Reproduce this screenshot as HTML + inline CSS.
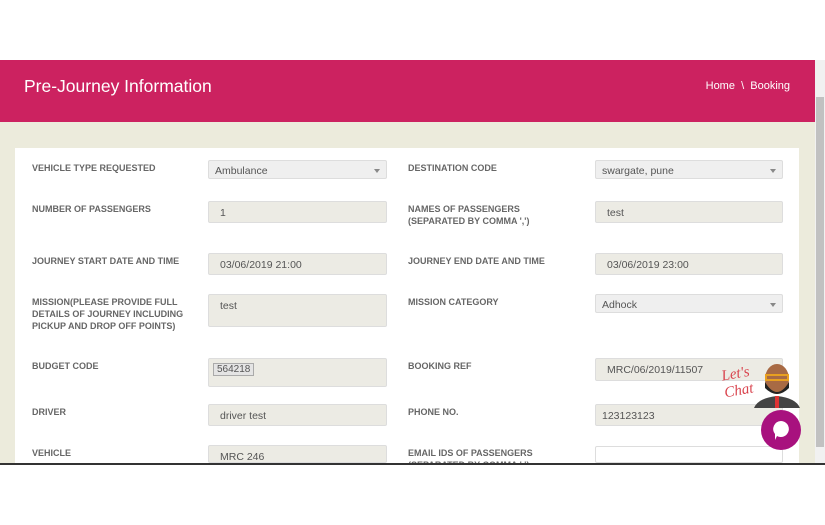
<!DOCTYPE html><html><head><style>
body{margin:0;width:825px;height:525px;overflow:hidden;background:#fff;font-family:"Liberation Sans",sans-serif;position:relative}
.hdr{position:absolute;left:0;top:60px;width:815px;height:62px;background:#cc2260}
.hdr h1{position:absolute;left:24px;top:16px;margin:0;font-weight:normal;font-size:17.5px;color:#fff}
.bc{position:absolute;right:25px;top:20px;font-size:11px;color:#fff}
.bg{position:absolute;left:0;top:122px;width:815px;height:341px;background:#ecebdc;overflow:hidden}
.card{position:absolute;left:15px;top:26px;width:784px;height:400px;background:#fff}
.sb{position:absolute;left:815px;top:60px;width:10px;height:403px;background:#f1f1f1}
.th{position:absolute;left:1px;top:37px;width:8px;height:350px;background:#c1c1c1}
.line{position:absolute;left:0;top:463px;width:825px;height:2px;background:#333}
.l{position:absolute;font-size:9px;font-weight:bold;color:#666;line-height:12px}
.i{position:absolute;background:#ecebe4;border:1px solid #ddd;border-radius:2px;font-size:10.5px;color:#555;box-sizing:border-box;padding:5px 11px}
.s{background:#efefef;padding:4px 6px}
.s:after{content:"";position:absolute;right:6px;top:8px;border:3px solid transparent;border-top:4px solid #888}
</style></head><body>
<div class="hdr"><h1>Pre-Journey Information</h1><div class="bc">Home &nbsp;\&nbsp; Booking</div></div>
<div class="bg"><div class="card"></div></div>
<div class="sb"><div class="th"></div></div>
<div class="line"></div>
<div class="l" style="left:32px;top:162px">VEHICLE TYPE REQUESTED</div>
<div class="i s" style="left:208px;top:160px;width:179px;height:19px">Ambulance</div>
<div class="l" style="left:408px;top:162px">DESTINATION CODE</div>
<div class="i s" style="left:595px;top:160px;width:188px;height:19px">swargate, pune</div>
<div class="l" style="left:32px;top:203px">NUMBER OF PASSENGERS</div>
<div class="i" style="left:208px;top:201px;width:179px;height:22px">1</div>
<div class="l" style="left:408px;top:203px">NAMES OF PASSENGERS<br>(SEPARATED BY COMMA ',')</div>
<div class="i" style="left:595px;top:201px;width:188px;height:22px">test</div>
<div class="l" style="left:32px;top:255px">JOURNEY START DATE AND TIME</div>
<div class="i" style="left:208px;top:253px;width:179px;height:22px">03/06/2019 21:00</div>
<div class="l" style="left:408px;top:255px">JOURNEY END DATE AND TIME</div>
<div class="i" style="left:595px;top:253px;width:188px;height:22px">03/06/2019 23:00</div>
<div class="l" style="left:32px;top:296px">MISSION(PLEASE PROVIDE FULL<br>DETAILS OF JOURNEY INCLUDING<br>PICKUP AND DROP OFF POINTS)</div>
<div class="i" style="left:208px;top:294px;width:179px;height:33px">test</div>
<div class="l" style="left:408px;top:296px">MISSION CATEGORY</div>
<div class="i s" style="left:595px;top:294px;width:188px;height:19px">Adhock</div>
<div class="l" style="left:32px;top:360px">BUDGET CODE</div>
<div class="i" style="left:208px;top:358px;width:179px;height:29px;padding:4px"><span style="border:1px solid #aaa;background:#e4e4e4;padding:0 3px;font-size:10px">564218</span></div>
<div class="l" style="left:408px;top:360px">BOOKING REF</div>
<div class="i" style="left:595px;top:358px;width:188px;height:23px">MRC/06/2019/11507</div>
<div class="l" style="left:32px;top:406px">DRIVER</div>
<div class="i" style="left:208px;top:404px;width:179px;height:22px">driver test</div>
<div class="l" style="left:408px;top:406px">PHONE NO.</div>
<div class="i" style="left:595px;top:404px;width:188px;height:22px;padding-left:6px">123123123</div>
<div class="l" style="left:32px;top:447px">VEHICLE</div>
<div class="i" style="left:208px;top:445px;width:179px;height:18px">MRC 246</div>
<div class="l" style="left:408px;top:447px;height:16px;overflow:hidden">EMAIL IDS OF PASSENGERS<br>(SEPARATED BY COMMA ',')</div>
<div class="i" style="left:595px;top:446px;width:188px;height:17px;background:#fff"></div>
<div style="position:absolute;left:723px;top:366px;color:#d9434d;font-family:'Liberation Serif',serif;font-style:italic;font-size:15px;line-height:17px;transform:rotate(-10deg)">Let's<br>Chat</div>
<svg style="position:absolute;left:752px;top:362px" width="50" height="46"><path d="M2 46 Q6 36 25 34 Q44 36 48 46Z" fill="#444"/><rect x="23" y="34" width="4" height="12" fill="#d33"/><ellipse cx="25" cy="17" rx="12" ry="15" fill="#a86a44"/><path d="M13 20 Q25 40 37 20 L37 26 Q25 38 13 26Z" fill="#222"/><rect x="14" y="13" width="22" height="5" fill="none" stroke="#e8a020" stroke-width="2"/></svg>
<div style="position:absolute;left:761px;top:410px;width:40px;height:40px;border-radius:50%;background:#a8117e"></div>
<svg style="position:absolute;left:770px;top:419px" width="22" height="22"><path d="M11 2 A8 8 0 1 1 7 17 L5 21 L5 15 A8 8 0 0 1 11 2Z" fill="#fff"/></svg>
</body></html>
